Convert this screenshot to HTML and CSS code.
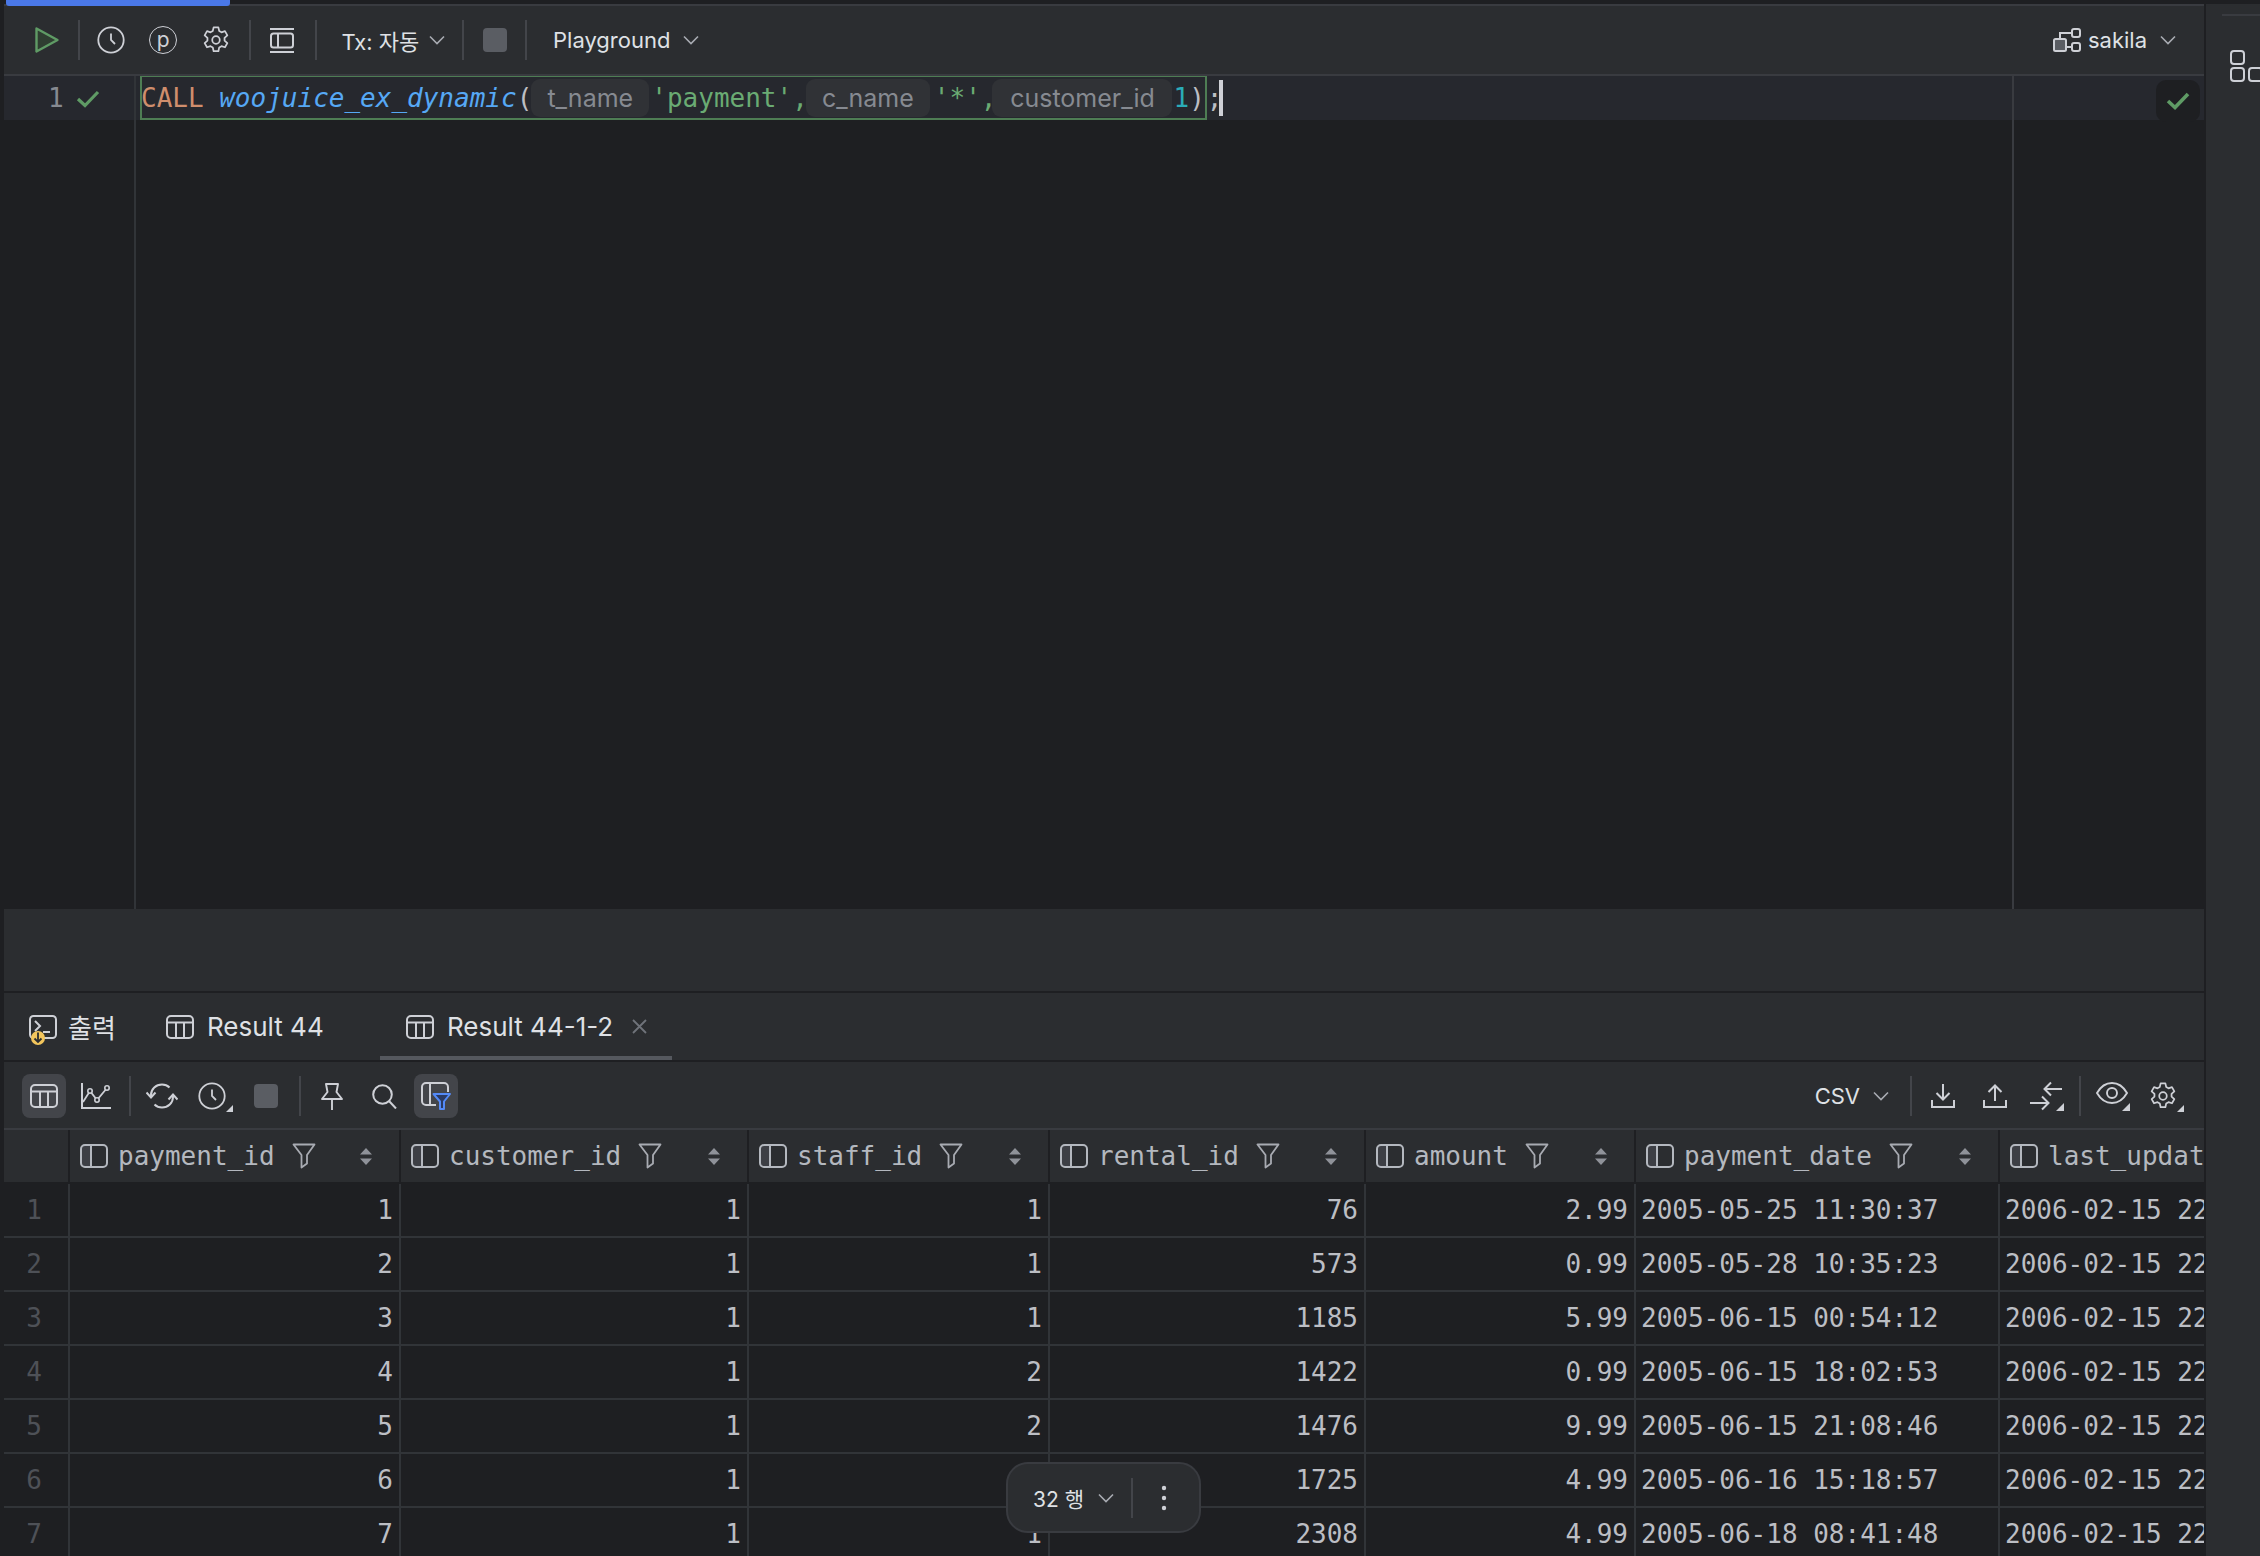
FILE: index.html
```html
<!DOCTYPE html>
<html lang="ko">
<head>
<meta charset="utf-8">
<title>DataGrip console</title>
<link rel="stylesheet" href="styles.css">
</head>
<body>
<svg class="defs" width="0" height="0" aria-hidden="true">
  <symbol id="i-chev" viewBox="0 0 16 10"><path d="M1 1.5 8 8.5 15 1.5" fill="none" stroke="#a8abb2" stroke-width="1.6"/></symbol>
  <symbol id="i-gear" viewBox="0 0 20 20"><path d="M8.3 1h3.4l.6 2.6 1.6.9 2.5-.8 1.7 3-2 1.8v1.9l2 1.8-1.7 3-2.5-.8-1.6.9-.6 2.7H8.3l-.6-2.7-1.6-.9-2.5.8-1.7-3 2-1.8V8.5l-2-1.8 1.7-3 2.5.8 1.6-.9z" fill="none" stroke="#ced0d6" stroke-width="1.25" stroke-linejoin="round"/><circle cx="10" cy="10" r="2.7" fill="none" stroke="#ced0d6" stroke-width="1.25"/></symbol>
  <symbol id="i-clock" viewBox="0 0 28 28"><circle cx="14" cy="14" r="12.7" fill="none" stroke="#ced0d6" stroke-width="1.8"/><path d="M14 7.5V14l4 4" fill="none" stroke="#ced0d6" stroke-width="1.8"/></symbol>
  <symbol id="i-table" viewBox="0 0 28 24"><rect x="1" y="1" width="26" height="22" rx="4" fill="none" stroke="#ced0d6" stroke-width="2"/><path d="M1 7.5H27M10 7.5V23M18 7.5V23" fill="none" stroke="#ced0d6" stroke-width="2"/></symbol>
  <symbol id="i-col" viewBox="0 0 28 24"><path d="M5 1H11V23H5A4 4 0 0 1 1 19V5A4 4 0 0 1 5 1Z" fill="#3d3f45"/><rect x="1" y="1" width="26" height="22" rx="4" fill="none" stroke="#b4b8bf" stroke-width="2"/><path d="M11 1V23" stroke="#b4b8bf" stroke-width="2"/></symbol>
  <symbol id="i-filter" viewBox="0 0 24 26"><path d="M1.5 1.5H22.5L15 12V20.5L9.500 24.5V12Z" fill="none" stroke="#a8abb2" stroke-width="1.8" stroke-linejoin="round"/></symbol>
  <symbol id="i-sort" viewBox="0 0 12 17"><path d="M6 0 12 6.5H0ZM0 10.5H12L6 17Z" fill="#8f9299"/></symbol>
  <symbol id="i-corner" viewBox="0 0 8 8"><path d="M8 0V8H0Z" fill="#ced0d6"/></symbol>
</svg>

<div class="app">
  <div class="edge"></div>
  <main class="main">
    <div class="topline"><span class="progress"></span></div>

    <div class="bar mainbar">
      <span class="ib">
        <svg width="26" height="28" viewBox="0 0 26 28"><path d="M2.5 2.5 23.5 14 2.5 25.5Z" fill="#2f3e31" stroke="#5f9b65" stroke-width="2.4" stroke-linejoin="round"/></svg>
      </span>
      <span class="sep"></span>
      <span class="ib"><svg width="28" height="28"><use href="#i-clock"/></svg></span>
      <span class="ib"><span class="picon">p</span></span>
      <span class="ib"><svg width="28" height="28"><use href="#i-gear"/></svg></span>
      <span class="sep sepb"></span>
      <span class="ib">
        <svg width="24" height="25" viewBox="0 0 24 25"><path d="M0 1H24M0 24H24M8 5.500V19.500" stroke="#ced0d6" stroke-width="2" fill="none"/><rect x="1" y="5.500" width="22" height="14" rx="2.500" fill="none" stroke="#ced0d6" stroke-width="2"/></svg>
      </span>
      <span class="sep sepc"></span>
      <span class="drop tx">Tx: 자동<svg class="chev" width="16" height="10"><use href="#i-chev"/></svg></span>
      <span class="sep"></span>
      <span class="ib"><span class="stop"></span></span>
      <span class="sep"></span>
      <span class="drop pg">Playground<svg class="chev" width="16" height="10"><use href="#i-chev"/></svg></span>
      <span class="drop conn">
        <svg width="28" height="24" viewBox="0 0 28 24"><rect x="1" y="11" width="12" height="12" rx="1.500" fill="#5a5d63" stroke="#ced0d6" stroke-width="2"/><rect x="19" y="1" width="8" height="8" rx="2" fill="none" stroke="#ced0d6" stroke-width="2"/><rect x="19" y="15" width="8" height="8" rx="2" fill="none" stroke="#ced0d6" stroke-width="2"/><path d="M7 11V5H19M13 19H19" fill="none" stroke="#ced0d6" stroke-width="2"/></svg>
        <span class="connname">sakila</span><svg class="chev" width="16" height="10"><use href="#i-chev"/></svg>
      </span>
    </div>

    <section class="editor">
      <div class="caretrow">
        <div class="gutter"><span class="lineno">1</span>
          <svg width="24" height="18" viewBox="0 0 24 18"><path d="M2 9 9 15.500 22 2" fill="none" stroke="#5f9b65" stroke-width="3.200"/></svg>
        </div>
        <div class="code">
          <span class="stmt"><span class="kw">CALL</span> <span class="fn">woojuice_ex_dynamic</span>(<span class="hint h1">t_name</span><span class="str">'payment',</span><span class="hint h2">c_name</span><span class="str">'*',</span><span class="hint h3">customer_id</span><span class="num">1</span>)</span><span class="semi">;</span><span class="caret"></span>
        </div>
      </div>
      <div class="guide-gutter"></div>
      <div class="guide-margin"></div>
      <div class="okbox"><svg width="24" height="18" viewBox="0 0 24 18"><path d="M2 9 9 15.500 22 2" fill="none" stroke="#5f9b65" stroke-width="3.600"/></svg></div>
    </section>

    <div class="spacer"></div>

    <nav class="tabs">
      <span class="tab t0">
        <svg class="consoleicon" width="30" height="32" viewBox="0 0 30 32"><rect x="2" y="1" width="26" height="22" rx="3.500" fill="none" stroke="#ced0d6" stroke-width="2"/><path d="M7 6 12 11 7 16M15 17H22" fill="none" stroke="#ced0d6" stroke-width="2"/><circle cx="10" cy="23" r="7" fill="#f2c55c"/><path d="M10 17.500V27M6.500 23.500 10 27 13.500 23.500" fill="none" stroke="#2b2d30" stroke-width="1.800"/></svg>
        출력
      </span>
      <span class="tab t1"><svg width="28" height="24"><use href="#i-table"/></svg>Result 44</span>
      <span class="tab t2 active"><svg width="28" height="24"><use href="#i-table"/></svg>Result 44-1-2
        <svg class="close" width="15" height="15" viewBox="0 0 15 15"><path d="M1 1 14 14M14 1 1 14" stroke="#6f737a" stroke-width="1.800"/></svg>
      </span>
    </nav>

    <div class="bar resultbar">
      <span class="ib"><span class="on"><svg width="28" height="24"><use href="#i-table"/></svg></span></span>
      <span class="ib">
        <svg width="30" height="26" viewBox="0 0 30 26"><path d="M1 0V25H30" fill="none" stroke="#ced0d6" stroke-width="2"/><path d="M2 19 9 8 16 17 26 5" fill="none" stroke="#ced0d6" stroke-width="1.800"/><circle cx="9" cy="8" r="2.200" fill="#2b2d30" stroke="#ced0d6" stroke-width="1.600"/><circle cx="16" cy="17" r="2.200" fill="#2b2d30" stroke="#ced0d6" stroke-width="1.600"/><circle cx="26" cy="5" r="2.200" fill="#2b2d30" stroke="#ced0d6" stroke-width="1.600"/></svg>
      </span>
      <span class="sep rsep"></span>
      <span class="ib">
        <svg width="32" height="26" viewBox="0 0 32 26"><path d="M5 14V12C5 6 10 1.500 16 1.500 19 1.500 21.500 2.500 23.500 4.500M27 12V14C27 20 22 24.500 16 24.500 13 24.500 10.500 23.500 8.500 21.500" fill="none" stroke="#ced0d6" stroke-width="2"/><path d="M0.500 9.500 5 14.500 9.500 9.500M22.500 16.500 27 11.500 31.500 16.500" fill="none" stroke="#ced0d6" stroke-width="2"/></svg>
      </span>
      <span class="ib">
        <span class="cornered"><svg width="28" height="28"><use href="#i-clock"/></svg><svg class="corner" width="7" height="7"><use href="#i-corner"/></svg></span>
      </span>
      <span class="ib"><span class="stop"></span></span>
      <span class="sep rsep"></span>
      <span class="ib">
        <svg width="22" height="27" viewBox="0 0 22 27"><path d="M5 1H17L15.500 9 21 16H1L6.500 9ZM11 16V27" fill="none" stroke="#ced0d6" stroke-width="1.900" stroke-linejoin="round"/></svg>
      </span>
      <span class="ib">
        <svg width="25" height="25" viewBox="0 0 25 25"><circle cx="10.500" cy="10.500" r="9.300" fill="none" stroke="#ced0d6" stroke-width="2"/><path d="M17 17 24 24.500" stroke="#ced0d6" stroke-width="2"/></svg>
      </span>
      <span class="ib"><span class="on">
        <svg width="30" height="28" viewBox="0 0 30 28"><path d="M15 23H5A4 4 0 0 1 1 19V5A4 4 0 0 1 5 1H23A4 4 0 0 1 27 5V10M9 1V23" fill="none" stroke="#ced0d6" stroke-width="2"/><path d="M12.500 12H29L23 19.500V27H19V19.500Z" fill="#2a3a63" stroke="#548af7" stroke-width="2" stroke-linejoin="round"/></svg>
      </span></span>

      <span class="csv">CSV<svg class="chev" width="16" height="10"><use href="#i-chev"/></svg></span>
      <span class="sep csvsep"></span>
      <span class="ib">
        <svg width="24" height="24" viewBox="0 0 24 24"><path d="M12 0V15M5.500 9 12 15.500 18.500 9M1 16V23H23V16" fill="none" stroke="#ced0d6" stroke-width="2"/></svg>
      </span>
      <span class="ib">
        <svg width="24" height="24" viewBox="0 0 24 24"><path d="M12 17V1.500M5.500 8 12 1.500 18.500 8M1 16V23H23V16" fill="none" stroke="#ced0d6" stroke-width="2"/></svg>
      </span>
      <span class="ib">
        <svg width="34" height="30" viewBox="0 0 34 30"><path d="M32 8H15M21 1.500 14.500 8 21 14.500M0 22H18M12 15.500 18.500 22 12 28.500" fill="none" stroke="#ced0d6" stroke-width="2"/><path d="M34 22V30H26Z" fill="#ced0d6"/></svg>
      </span>
      <span class="sep eyesep"></span>
      <span class="ib">
        <svg width="34" height="30" viewBox="0 0 34 30"><path d="M1 12C5 5 10 2 16 2S27 5 31 12C27 19 22 22 16 22S5 19 1 12Z" fill="none" stroke="#ced0d6" stroke-width="1.900"/><circle cx="16" cy="12" r="5" fill="none" stroke="#ced0d6" stroke-width="1.900"/><path d="M34 22V30H26Z" fill="#ced0d6"/></svg>
      </span>
      <span class="ib">
        <span class="cornered"><svg width="28" height="28"><use href="#i-gear"/></svg><svg class="corner" width="7" height="7"><use href="#i-corner"/></svg></span>
      </span>
    </div>

    <section class="grid">
      <div class="row head">
        <div class="cell rn"></div>
        <div class="cell hc"><svg width="28" height="24"><use href="#i-col"/></svg><span class="hname">payment_id</span><svg class="hf" width="24" height="26"><use href="#i-filter"/></svg><svg class="hs" width="12" height="17"><use href="#i-sort"/></svg></div>
        <div class="cell hc"><svg width="28" height="24"><use href="#i-col"/></svg><span class="hname">customer_id</span><svg class="hf" width="24" height="26"><use href="#i-filter"/></svg><svg class="hs" width="12" height="17"><use href="#i-sort"/></svg></div>
        <div class="cell hc"><svg width="28" height="24"><use href="#i-col"/></svg><span class="hname">staff_id</span><svg class="hf" width="24" height="26"><use href="#i-filter"/></svg><svg class="hs" width="12" height="17"><use href="#i-sort"/></svg></div>
        <div class="cell hc"><svg width="28" height="24"><use href="#i-col"/></svg><span class="hname">rental_id</span><svg class="hf" width="24" height="26"><use href="#i-filter"/></svg><svg class="hs" width="12" height="17"><use href="#i-sort"/></svg></div>
        <div class="cell hc"><svg width="28" height="24"><use href="#i-col"/></svg><span class="hname">amount</span><svg class="hf" width="24" height="26"><use href="#i-filter"/></svg><svg class="hs" width="12" height="17"><use href="#i-sort"/></svg></div>
        <div class="cell hc"><svg width="28" height="24"><use href="#i-col"/></svg><span class="hname">payment_date</span><svg class="hf" width="24" height="26"><use href="#i-filter"/></svg><svg class="hs" width="12" height="17"><use href="#i-sort"/></svg></div>
        <div class="cell hc last"><svg width="28" height="24"><use href="#i-col"/></svg><span class="hname">last_update</span></div>
      </div>

      <div class="row"><div class="cell rn">1</div><div class="cell n">1</div><div class="cell n">1</div><div class="cell n">1</div><div class="cell n">76</div><div class="cell n">2.99</div><div class="cell d">2005-05-25 11:30:37</div><div class="cell d last">2006-02-15 22:12:30</div></div>
      <div class="row"><div class="cell rn">2</div><div class="cell n">2</div><div class="cell n">1</div><div class="cell n">1</div><div class="cell n">573</div><div class="cell n">0.99</div><div class="cell d">2005-05-28 10:35:23</div><div class="cell d last">2006-02-15 22:12:30</div></div>
      <div class="row"><div class="cell rn">3</div><div class="cell n">3</div><div class="cell n">1</div><div class="cell n">1</div><div class="cell n">1185</div><div class="cell n">5.99</div><div class="cell d">2005-06-15 00:54:12</div><div class="cell d last">2006-02-15 22:12:30</div></div>
      <div class="row"><div class="cell rn">4</div><div class="cell n">4</div><div class="cell n">1</div><div class="cell n">2</div><div class="cell n">1422</div><div class="cell n">0.99</div><div class="cell d">2005-06-15 18:02:53</div><div class="cell d last">2006-02-15 22:12:30</div></div>
      <div class="row"><div class="cell rn">5</div><div class="cell n">5</div><div class="cell n">1</div><div class="cell n">2</div><div class="cell n">1476</div><div class="cell n">9.99</div><div class="cell d">2005-06-15 21:08:46</div><div class="cell d last">2006-02-15 22:12:30</div></div>
      <div class="row"><div class="cell rn">6</div><div class="cell n">6</div><div class="cell n">1</div><div class="cell n">1</div><div class="cell n">1725</div><div class="cell n">4.99</div><div class="cell d">2005-06-16 15:18:57</div><div class="cell d last">2006-02-15 22:12:30</div></div>
      <div class="row"><div class="cell rn">7</div><div class="cell n">7</div><div class="cell n">1</div><div class="cell n">1</div><div class="cell n">2308</div><div class="cell n">4.99</div><div class="cell d">2005-06-18 08:41:48</div><div class="cell d last">2006-02-15 22:12:30</div></div>

      <div class="pill">
        <span class="pilltext">32 행<svg class="chev" width="16" height="10"><use href="#i-chev"/></svg></span>
        <span class="pillsep"></span>
        <svg width="6" height="26" viewBox="0 0 6 26"><circle cx="3" cy="3" r="2.200" fill="#ced0d6"/><circle cx="3" cy="13" r="2.200" fill="#ced0d6"/><circle cx="3" cy="23" r="2.200" fill="#ced0d6"/></svg>
      </div>
    </section>
  </main>

  <aside class="strip">
    <span class="stripline"></span>
    <svg class="stripicon" width="30" height="32" viewBox="0 0 30 32"><rect x="1" y="1" width="13" height="13" rx="3" fill="none" stroke="#ced0d6" stroke-width="2"/><rect x="1" y="18" width="13" height="13" rx="3" fill="none" stroke="#ced0d6" stroke-width="2"/><rect x="19" y="18" width="13" height="13" rx="3" fill="none" stroke="#ced0d6" stroke-width="2"/></svg>
  </aside>
</div>
</body>
</html>
```

FILE: styles.css
```css
* { box-sizing: border-box; }
html, body { margin: 0; height: 100%; overflow: hidden; background: #1e1f22; }
body { font-family: Inter, "Noto Sans CJK KR", sans-serif; color: #dfe1e5; }
.defs { position: absolute; }
svg { flex: none; display: block; }

.app { display: flex; width: 2260px; height: 1556px; overflow: hidden; }
.edge { width: 4px; background: #1e1f22; flex: none; }
.main { width: 2200px; flex: none; display: flex; flex-direction: column; background: #2b2d30; }
.strip { flex: 1; margin-left: 2px; background: #2b2d30; border-top: 4px solid #1e1f22; position: relative; padding: 46px 0 0 24px; box-shadow: -2px 0 0 #1e1f22; }
.stripline { position: absolute; left: 16px; right: 0; top: 10px; height: 2px; background: #393b40; }

.topline { height: 6px; flex: none; background: #1e1f22; border-bottom: 2px solid #393b40; position: relative; }
.progress { position: absolute; left: 2px; top: 0; width: 224px; height: 6px; background: #4a78e8; border-radius: 0 0 3px 3px; }

.bar { display: flex; align-items: center; flex: none; background: #2b2d30; }
.mainbar { height: 70px; border-bottom: 2px solid #393b40; padding-left: 17px; font-size: 22px; }
.ib { width: 52.500px; height: 44px; display: flex; align-items: center; justify-content: center; flex: none; }
.sep { width: 2px; height: 40px; background: #43454a; margin: 0 5px 0 4px; flex: none; }
.sepb { margin: 0 5px 0 7px; }
.sepc { margin: 0 5px 0 6px; }
.picon { width: 28px; height: 28px; border: 1.8px solid #ced0d6; border-radius: 50%; display: flex; align-items: center; justify-content: center; font-size: 21px; line-height: 1; color: #ced0d6; padding-bottom: 2px; }
.stop { width: 24px; height: 24px; border-radius: 4px; background: #5a5d63; display: block; }
.drop { display: flex; align-items: center; }
.tx { margin-left: 20px; width: 116px; }
.pg { margin-left: 21px; }
.chev { margin-left: 13px; }
.tx .chev { margin-left: 10px; }
.conn { margin-left: auto; margin-right: 28px; }
.connname { margin-left: 7px; }

.editor { height: 833px; flex: none; background: #1e1f22; position: relative; }
.guide-gutter { position: absolute; left: 130px; top: 0; bottom: 0; width: 2px; background: #313438; }
.guide-margin { position: absolute; left: 2008px; top: 0; bottom: 0; width: 2px; background: #393b40; }
.caretrow { height: 44px; background: #26282e; display: flex; font-family: "DejaVu Sans Mono", monospace; font-size: 26px; color: #bcbec4; }
.gutter { width: 136px; display: flex; align-items: center; padding-left: 44px; font-size: 26px; color: #868a91; }
.gutter svg { margin-left: 12px; margin-top: 2px; }
.lineno { width: 16px; }
.code { display: flex; align-items: center; height: 44px; white-space: pre; }
.stmt { display: flex; align-items: center; height: 44px; border: 2px solid #4e7d54; border-top-width: 1px; line-height: 40px; }
.kw { color: #cf8e6d; margin-left: -1px; }
.fn { color: #56a8f5; font-style: italic; margin-left: 15.600px; }
.str { color: #6aab73; }
.num { color: #2aacb8; }
.hint { display: flex; align-items: center; justify-content: center; height: 38px; border-radius: 9px; background: #303236; color: #868a91; font-family: Inter, sans-serif; font-size: 25px; margin-top: -1px; }
.h1 { width: 118px; margin: 0 2px 0 -1px; }
.h2 { width: 124px; margin: 0 4px 0 -2px; }
.h3 { width: 180px; margin: 0 1px 0 -4px; }
.caret { width: 4px; height: 36px; background: #ced0d6; margin-left: -3px; }
.okbox { position: absolute; left: 2152px; top: 4px; width: 44px; height: 42px; border-radius: 10px; background: #1e1f22; display: flex; align-items: center; justify-content: center; }

.spacer { height: 82px; flex: none; background: #2b2d30; }
.tabs { height: 71px; flex: none; display: flex; border-top: 2px solid #1e1f22; border-bottom: 2px solid #1e1f22; font-size: 26px; background: #2b2d30; }
.tab { display: flex; align-items: center; height: 100%; position: relative; white-space: nowrap; }
.tab svg { margin-right: 13px; }
.t0 { margin-left: 24px; width: 130px; }
.t0 svg { margin-right: 10px; margin-top: 8px; }
.t1 { margin-left: 8px; width: 214px; }
.t2 { padding-left: 26px; width: 292px; }
.t2.active::after { content: ""; position: absolute; left: 0; right: 0; bottom: 0; height: 4px; background: #55585e; }
.tab .close { margin: 0 0 0 19px; }

.resultbar { height: 68px; padding: 2px 13px 0 14px; border-bottom: 2px solid #393b40; font-size: 22px; }
.resultbar .ib { width: 52px; }
.on { width: 44px; height: 44px; border-radius: 8px; background: #43454a; display: flex; align-items: center; justify-content: center; }
.rsep { margin: 0 5px 0 7px; }
.cornered { position: relative; display: block; padding-right: 4px; }
.corner { position: absolute; right: -3px; bottom: -2px; }
.csv { display: flex; align-items: center; margin-left: auto; }
.csvsep { margin: 0 5px 0 21px; }
.eyesep { margin: 0 6px; }

.grid { flex: 1; position: relative; overflow: hidden; background: #1e1f22; font-family: "DejaVu Sans Mono", monospace; font-size: 26px; color: #bcbec4; }
.row { display: grid; grid-template-columns: 66px 331px 348px 301px 316px 270px 364px 204px; height: 54px; border-bottom: 2px solid #313438; }
.cell { display: flex; align-items: center; white-space: pre; overflow: hidden; border-right: 2px solid #313438; min-width: 0; }
.cell.last { border-right: 0; }
.rn { justify-content: center; color: #4e5157; padding-right: 4px; }
.n { justify-content: flex-end; padding-right: 6px; }
.d { padding-left: 5px; }
.head { background: #2b2d30; border-bottom: 2px solid #1e1f22; }
.head .cell { border-right-color: #1e1f22; }
.hc { padding-left: 10px; color: #b4b8bf; position: relative; }
.hname { margin-left: 10px; }
.hf { margin-left: 17px; }
.hs { position: absolute; right: 27px; top: 18px; }

.pill { position: absolute; left: 1002px; top: 332px; width: 195px; height: 71px; border: 2px solid #393b40; border-radius: 22px; background: #2b2d30; display: flex; align-items: center; font-family: Inter, "Noto Sans CJK KR", sans-serif; font-size: 21px; color: #dfe1e5; padding-left: 25px; }
.pilltext { display: flex; align-items: center; width: 98px; }
.pilltext .chev { margin-left: 14px; }
.pillsep { width: 2px; height: 40px; background: #43454a; margin-right: 28px; }
```
